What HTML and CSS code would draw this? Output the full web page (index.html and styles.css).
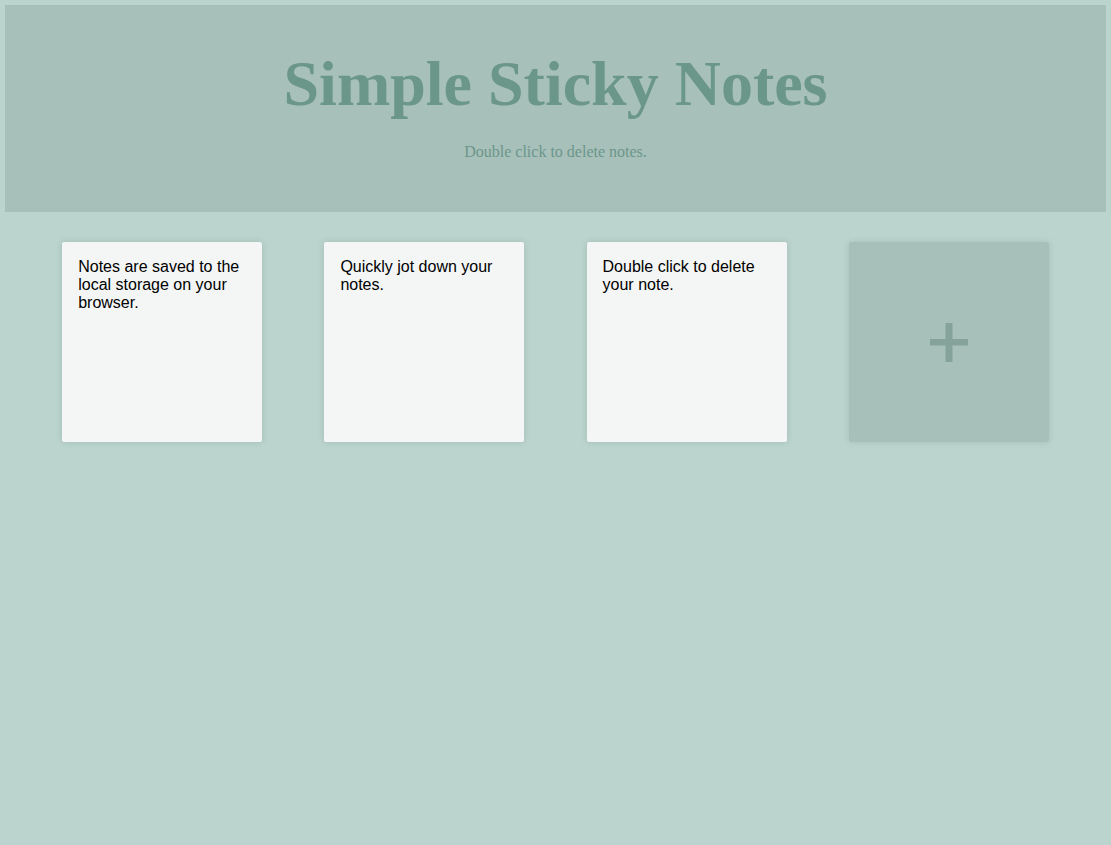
FILE: index.html
```html
<!DOCTYPE html>
<html lang="en">
<head>
<meta charset="utf-8">
<title>Simple Sticky Notes</title>
<link rel="stylesheet" href="styles.css">
</head>
<body>
  <header class="header">
    <h1 class="title">Simple Sticky Notes</h1>
    <p class="subtitle">Double click to delete notes.</p>
  </header>
  <main class="notes">
    <div class="note">Notes are saved to the local storage on your browser.</div>
    <div class="note">Quickly jot down your notes.</div>
    <div class="note">Double click to delete your note.</div>
    <button class="add-note" type="button" aria-label="Add note">
      <svg width="38" height="39" viewBox="0 0 38 39" aria-hidden="true">
        <rect x="0" y="16" width="38" height="6.5" fill="#86a39b"/>
        <rect x="15.5" y="0" width="7" height="39" fill="#86a39b"/>
      </svg>
    </button>
  </main>
</body>
</html>
```
FILE: styles.css
```css
html, body {
  margin: 0;
  padding: 0;
}
body {
  background: #bbd4ce;
  font-family: "Liberation Serif", "Times New Roman", serif;
  min-height: 845px;
}
.header {
  margin: 5px;
  height: 207px;
  background: #a8c0ba;
  text-align: center;
  box-sizing: border-box;
  padding-top: 39px;
}
.title {
  margin: 0;
  font-family: "Liberation Serif", "Times New Roman", serif;
  font-weight: bold;
  font-size: 64px;
  line-height: 80px;
  color: #6b968a;
}
.subtitle {
  margin: 19px 0 0;
  font-size: 16px;
  line-height: 18px;
  color: #6b968a;
}
.notes {
  display: flex;
  justify-content: space-evenly;
  align-items: flex-start;
  padding-top: 25px;
}
.note {
  width: 200px;
  height: 200px;
  box-sizing: border-box;
  padding: 16px;
  background: #f4f6f5;
  border-radius: 2px;
  box-shadow: 0 0 7px rgba(0, 0, 0, 0.12);
  font-family: "Liberation Sans", Arial, sans-serif;
  font-size: 16px;
  line-height: 18px;
  color: #000;
}
.add-note {
  width: 200px;
  height: 200px;
  border: none;
  border-radius: 2px;
  padding: 0;
  background: #a8c0ba;
  box-shadow: 0 0 7px rgba(0, 0, 0, 0.1);
  display: flex;
  align-items: center;
  justify-content: center;
}
```
